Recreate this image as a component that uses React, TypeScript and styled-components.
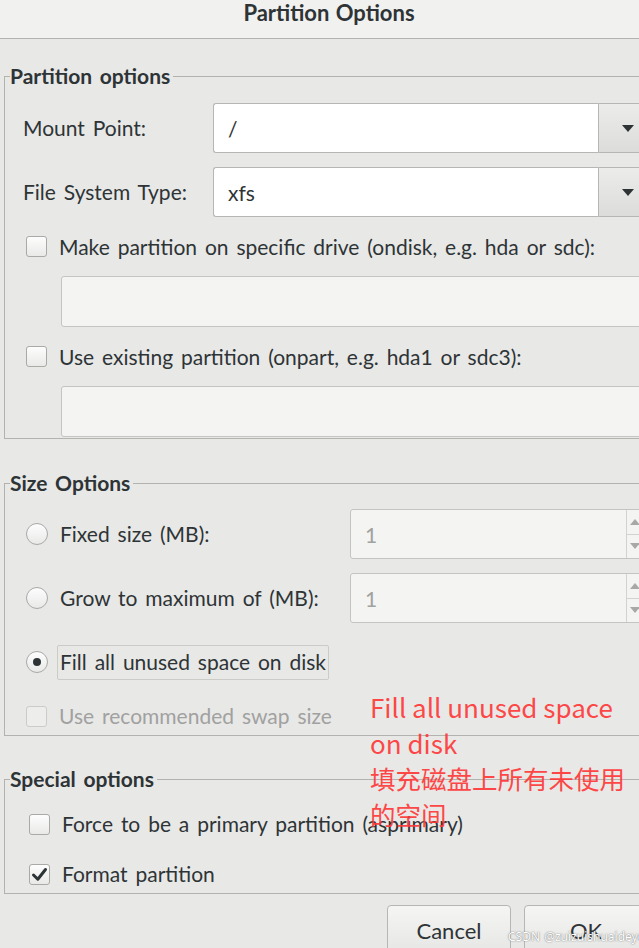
import styled, { createGlobalStyle } from 'styled-components';

const GlobalStyle = createGlobalStyle`
  html, body {
    margin: 0;
    padding: 0;
    height: 948px;
    overflow: hidden;
    background: #e8e8e7;
  }
  body {
    font-family: Lato, "Noto Sans", sans-serif;
    color: #2e3436;
    word-spacing: 2.5px;
  }
`;

const Dialog = styled.div`
  position: relative;
  width: 670px;
  background: #e8e8e7;
`;

const TitleBar = styled.div`
  height: 38px;
  padding-right: 12px;
  background: #f1f1f0;
  border-bottom: 1px solid #b3b3b0;
  display: flex;
  justify-content: center;
  align-items: flex-start;
  font-size: 22px;
  font-weight: 700;
  line-height: 25px;
  word-spacing: 1px;
`;

const Frame = styled.fieldset<{ $mt: number }>`
  margin: ${p => p.$mt}px 4px 0 4px;
  padding: 0;
  border: 1px solid #b2b2af;
  min-width: 0;
`;

const Legend = styled.legend`
  margin-left: 5px;
  padding: 0 3px 0 0;
  font-size: 21px;
  font-weight: 700;
  line-height: 24px;
`;

const FrameBody = styled.div<{ $pt: number; $pb: number; $pl: number }>`
  display: flex;
  flex-direction: column;
  gap: 14px;
  padding: ${p => p.$pt}px 7px ${p => p.$pb}px ${p => p.$pl}px;
`;

const FieldRow = styled.div`
  display: grid;
  grid-template-columns: 190px 1fr;
  align-items: center;
  height: 50px;
`;

const Label = styled.span<{ $disabled?: boolean }>`
  font-size: 21px;
  line-height: 24px;
  white-space: nowrap;
  color: ${p => (p.$disabled ? '#a1a1a0' : '#2e3436')};
`;

const Combo = styled.div`
  display: flex;
  height: 50px;
`;

const ComboField = styled.div`
  flex: 1;
  display: flex;
  align-items: center;
  padding-left: 14px;
  background: #ffffff;
  border: 1px solid #b6b6b3;
  border-right: none;
  border-radius: 3px 0 0 3px;
  font-size: 21px;
`;

const ComboButton = styled.div`
  width: 58px;
  display: flex;
  align-items: center;
  justify-content: center;
  background: linear-gradient(#ececeb, #dcdcda);
  border: 1px solid #b6b6b3;
  border-radius: 0 3px 3px 0;
`;

const DownArrow = styled.div<{ $color?: string; $size?: number }>`
  width: 0;
  height: 0;
  border-left: ${p => p.$size ?? 6}px solid transparent;
  border-right: ${p => p.$size ?? 6}px solid transparent;
  border-top: ${p => Math.round((p.$size ?? 6) * 1.1)}px solid ${p => p.$color ?? '#2e3436'};
`;

const UpArrow = styled.div<{ $color?: string; $size?: number }>`
  width: 0;
  height: 0;
  border-left: ${p => p.$size ?? 6}px solid transparent;
  border-right: ${p => p.$size ?? 6}px solid transparent;
  border-bottom: ${p => Math.round((p.$size ?? 6) * 1.1)}px solid ${p => p.$color ?? '#2e3436'};
`;

const CheckRow = styled.label<{ $h: number }>`
  display: flex;
  align-items: center;
  gap: 12px;
  height: ${p => p.$h}px;
  padding-left: 3px;
`;

const CheckBox = styled.span<{ $disabled?: boolean }>`
  width: 21px;
  height: 21px;
  box-sizing: border-box;
  flex: none;
  display: flex;
  align-items: center;
  justify-content: center;
  border: 1px solid ${p => (p.$disabled ? '#cbcbc8' : '#a9a9a6')};
  border-radius: 3px;
  background: ${p => (p.$disabled ? '#ededec' : 'linear-gradient(#fdfdfd, #e9e9e8)')};
`;

const Radio = styled.span`
  width: 22px;
  height: 22px;
  box-sizing: border-box;
  flex: none;
  display: flex;
  align-items: center;
  justify-content: center;
  border: 1px solid #a9a9a6;
  border-radius: 50%;
  background: linear-gradient(#fdfdfd, #e9e9e8);
`;

const RadioDot = styled.span`
  width: 8px;
  height: 8px;
  border-radius: 50%;
  background: #2e3436;
`;

const PlainEntry = styled.div`
  height: 51px;
  box-sizing: border-box;
  margin-left: 38px;
  background: #f4f4f3;
  border: 1px solid #c4c4c1;
  border-radius: 3px;
`;

const SizeRow = styled.div<{ $h: number }>`
  display: flex;
  align-items: center;
  justify-content: space-between;
  height: ${p => p.$h}px;
  padding-left: 3px;
`;

const RadioLabel = styled.div`
  display: flex;
  align-items: center;
  gap: 12px;
`;

const FocusText = styled.span`
  margin-left: -3px;
  padding: 4px 2px 5px 2px;
  border: 1px solid #cbcbc8;
  border-radius: 2px;
  font-size: 21px;
  line-height: 24px;
`;

const Spin = styled.div`
  width: 308px;
  height: 50px;
  box-sizing: border-box;
  display: flex;
  background: #f4f4f3;
  border: 1px solid #c4c4c1;
  border-radius: 3px;
`;

const SpinValue = styled.div`
  flex: 1;
  display: flex;
  align-items: center;
  padding-left: 14px;
  font-size: 21px;
  color: #a1a1a0;
`;

const SpinButtons = styled.div`
  width: 30px;
  display: flex;
  flex-direction: column;
  border-left: 1px solid #d2d2cf;
`;

const SpinButton = styled.div<{ $top?: boolean }>`
  flex: 1;
  display: flex;
  align-items: center;
  padding-left: 3px;
  border-bottom: ${p => (p.$top ? '1px solid #d2d2cf' : 'none')};
`;

const ButtonRow = styled.div`
  display: flex;
  justify-content: flex-end;
  gap: 13px;
  margin-top: 11px;
  padding-right: 22px;
`;

const Button = styled.button`
  width: 124px;
  height: 52px;
  padding: 0 0 1px 0;
  background: linear-gradient(#f5f5f4, #e5e5e3);
  border: 1px solid #b6b6b3;
  border-radius: 4px;
  font-family: Lato, "Noto Sans", sans-serif;
  font-size: 22px;
  color: #2e3436;
`;

const Annotation = styled.div`
  position: absolute;
  left: 370px;
  top: 689px;
  font-family: "Noto Sans CJK SC", sans-serif;
  font-size: 26px;
  line-height: 35.5px;
  word-spacing: 0;
  color: #ff3a3a;
  opacity: 0.92;
  white-space: nowrap;
`;

const AnnotationCjk = styled.span`
  font-size: 25.5px;
  letter-spacing: 0;
`;

const Watermark = styled.div`
  position: absolute;
  left: 508px;
  top: 928px;
  font-family: "Noto Sans", sans-serif;
  font-size: 12px;
  line-height: 18px;
  word-spacing: 1px;
  color: #ffffff;
  text-shadow: 0 0 1px rgba(90, 90, 90, 0.8), 0 0 2px rgba(120, 120, 120, 0.5);
  white-space: nowrap;
`;

const Tick = () => (
  <svg width="17" height="17" viewBox="0 0 17 17">
    <path d="M2.5 9 L6.8 13.2 L14.5 3.5" fill="none" stroke="#2e3436" strokeWidth="3" strokeLinecap="round" strokeLinejoin="round" />
  </svg>
);

function SizeSpin() {
  return (
    <Spin>
      <SpinValue>1</SpinValue>
      <SpinButtons>
        <SpinButton $top>
          <UpArrow $color="#a8a8a6" $size={5} />
        </SpinButton>
        <SpinButton>
          <DownArrow $color="#a8a8a6" $size={5} />
        </SpinButton>
      </SpinButtons>
    </Spin>
  );
}

export default function App() {
  return (
    <>
      <GlobalStyle />
      <Dialog>
        <TitleBar>Partition Options</TitleBar>

        <Frame $mt={25}>
          <Legend>Partition options</Legend>
          <FrameBody $pt={15} $pb={1} $pl={18}>
            <FieldRow>
              <Label>Mount Point:</Label>
              <Combo>
                <ComboField>/</ComboField>
                <ComboButton>
                  <DownArrow />
                </ComboButton>
              </Combo>
            </FieldRow>
            <FieldRow>
              <Label>File System Type:</Label>
              <Combo>
                <ComboField>xfs</ComboField>
                <ComboButton>
                  <DownArrow />
                </ComboButton>
              </Combo>
            </FieldRow>
            <CheckRow $h={31}>
              <CheckBox />
              <Label>Make partition on specific drive (ondisk, e.g. hda or sdc):</Label>
            </CheckRow>
            <PlainEntry />
            <CheckRow $h={31}>
              <CheckBox />
              <Label>Use existing partition (onpart, e.g. hda1 or sdc3):</Label>
            </CheckRow>
            <PlainEntry />
          </FrameBody>
        </Frame>

        <Frame $mt={32}>
          <Legend>Size Options</Legend>
          <FrameBody $pt={14} $pb={4} $pl={18}>
            <SizeRow $h={50}>
              <RadioLabel>
                <Radio />
                <Label>Fixed size (MB):</Label>
              </RadioLabel>
              <SizeSpin />
            </SizeRow>
            <SizeRow $h={50}>
              <RadioLabel>
                <Radio />
                <Label>Grow to maximum of (MB):</Label>
              </RadioLabel>
              <SizeSpin />
            </SizeRow>
            <SizeRow $h={50}>
              <RadioLabel>
                <Radio>
                  <RadioDot />
                </Radio>
                <FocusText>Fill all unused space on disk</FocusText>
              </RadioLabel>
            </SizeRow>
            <CheckRow $h={30}>
              <CheckBox $disabled />
              <Label $disabled>Use recommended swap size</Label>
            </CheckRow>
          </FrameBody>
        </Frame>

        <Frame $mt={31}>
          <Legend>Special options</Legend>
          <FrameBody $pt={15} $pb={1} $pl={21}>
            <CheckRow $h={36}>
              <CheckBox />
              <Label>Force to be a primary partition (asprimary)</Label>
            </CheckRow>
            <CheckRow $h={36}>
              <CheckBox>
                <Tick />
              </CheckBox>
              <Label>Format partition</Label>
            </CheckRow>
          </FrameBody>
        </Frame>

        <ButtonRow>
          <Button>Cancel</Button>
          <Button>OK</Button>
        </ButtonRow>

        <Annotation>
          Fill all unused space
          <br />
          on disk
          <br />
          <AnnotationCjk>填充磁盘上所有未使用</AnnotationCjk>
          <br />
          <AnnotationCjk>的空间</AnnotationCjk>
        </Annotation>
        <Watermark>CSDN @zuizuishuaideye_</Watermark>
      </Dialog>
    </>
  );
}
